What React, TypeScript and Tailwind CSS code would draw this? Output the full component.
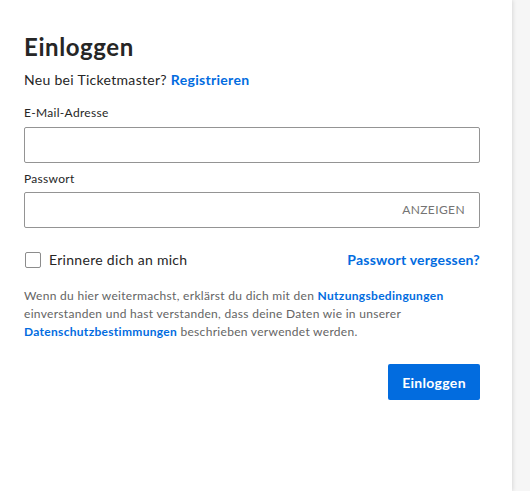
import React, { FC } from "react";

const App: FC = () => {
  return (
    <div className="w-[530px] h-[491px] bg-[#f6f6f6] font-['Lato',sans-serif] text-[#262626] tracking-[0.3px]">
      <div className="w-[512px] h-full bg-white shadow-[1px_0_4px_rgba(0,0,0,0.12)] px-6 pt-[33px]">
        {/* Title */}
        <h1 className="text-[24px] leading-[28px] font-bold tracking-[0.6px]">Einloggen</h1>
        <p className="mt-[10px] text-[14px] leading-[18px]">
          Neu bei Ticketmaster?{" "}
          <a className="text-[#026cdf] font-bold">Registrieren</a>
        </p>

        {/* Email */}
        <label className="block mt-[16px] text-[12px] leading-[16px]">E-Mail-Adresse</label>
        <div className="mt-[6px] w-[456px] h-[36px] border border-[#949494] rounded-[2px]"></div>

        {/* Password */}
        <label className="block mt-[8px] text-[12px] leading-[16px]">Passwort</label>
        <div className="mt-[5px] w-[456px] h-[36px] border border-[#949494] rounded-[2px] flex items-center justify-end pr-[14px]">
          <span className="text-[12px] text-[#747474] tracking-[0.4px]">ANZEIGEN</span>
        </div>

        {/* Remember */}
        <div className="mt-[21px] w-[456px] flex items-center justify-between">
          <label className="flex items-center gap-[8px] text-[14px]">
            <span className="w-[16px] h-[16px] border border-[#8c8c8c] rounded-[2px] ml-px"></span>
            Erinnere dich an mich
          </label>
          <a className="text-[14px] font-bold text-[#026cdf] tracking-[0.2px]">Passwort vergessen?</a>
        </div>

        {/* Terms */}
        <p className="mt-[17px] w-[430px] text-[12px] leading-[18px] text-[#646464]">
          Wenn du hier weitermachst, erklärst du dich mit den{" "}
          <a className="font-bold text-[#026cdf]">Nutzungsbedingungen</a> einverstanden und hast
          verstanden, dass deine Daten wie in unserer{" "}
          <a className="font-bold text-[#026cdf]">Datenschutzbestimmungen</a> beschrieben verwendet
          werden.
        </p>

        {/* Submit */}
        <div className="mt-[23px] w-[456px] flex justify-end">
          <button className="w-[92px] h-[36px] bg-[#026cdf] rounded-[2px] text-white text-[14px] font-bold tracking-[0.3px]">
            Einloggen
          </button>
        </div>
      </div>
    </div>
  );
};

export default App;
